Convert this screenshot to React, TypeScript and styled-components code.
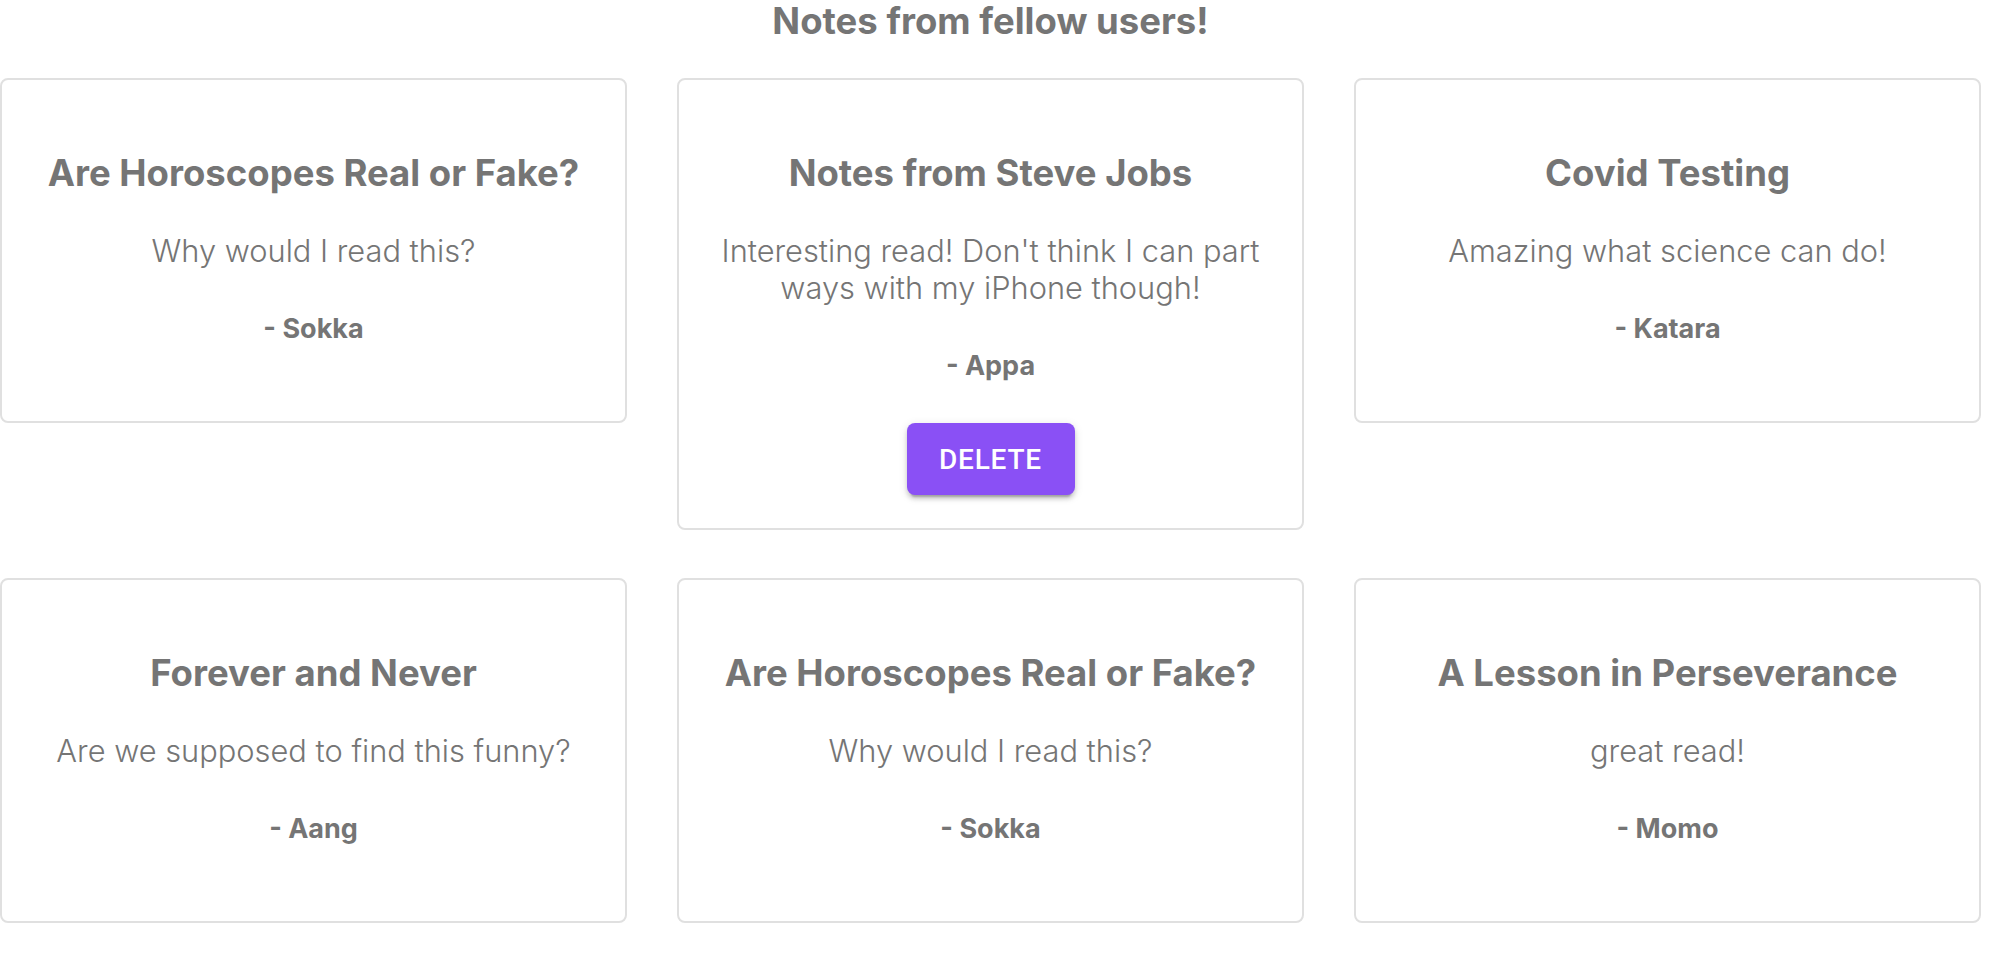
import React, { FC } from 'react';
import styled, { createGlobalStyle } from 'styled-components';

const GlobalStyle = createGlobalStyle`
  body {
    margin: 0;
    background: #ffffff;
    font-family: Inter, 'Noto Sans', sans-serif;
    color: #757575;
  }
`;

const Page = styled.main`
  width: 1981px;
`;

const Heading = styled.h1`
  margin: 0 0 36px;
  font-size: 36.5px;
  line-height: 42px;
  font-weight: 700;
  text-align: center;
  color: #757575;
`;

const Grid = styled.div`
  display: grid;
  grid-template-columns: repeat(3, 627px);
  column-gap: 50px;
  row-gap: 48px;
  align-items: start;
`;

const Card = styled.article`
  box-sizing: border-box;
  border: 2px solid #e0e0e0;
  border-radius: 8px;
  padding: 73px 32px 30px;
  text-align: center;
  background: #fff;
`;

const Title = styled.h2`
  margin: 0;
  font-size: 36.5px;
  line-height: 40px;
  font-weight: 700;
  color: #757575;
`;

const Body = styled.p`
  margin: 39px 0 45px;
  font-size: 30.8px;
  line-height: 37px;
  font-weight: 300;
  color: #757575;
`;

const Author = styled.p`
  margin: 0 0 47px;
  font-size: 27px;
  line-height: 30px;
  font-weight: 700;
  color: #757575;
`;

const DeleteButton = styled.button`
  display: block;
  margin: -5px auto 3px;
  width: 168px;
  height: 72px;
  border: none;
  border-radius: 8px;
  background: #8a50f5;
  color: #fff;
  font-family: Roboto, 'Liberation Sans', sans-serif;
  font-size: 28px;
  font-weight: 500;
  letter-spacing: 0.8px;
  text-transform: uppercase;
  cursor: pointer;
  box-shadow: 0 6px 2px -4px rgba(0, 0, 0, 0.2), 0 4px 4px 0 rgba(0, 0, 0, 0.14),
    0 2px 10px 0 rgba(0, 0, 0, 0.12);
`;

interface INote {
  id: number;
  title: string;
  body: string;
  author: string;
  mine?: boolean;
}

const notes: INote[] = [
  { id: 1, title: 'Are Horoscopes Real or Fake?', body: 'Why would I read this?', author: 'Sokka' },
  {
    id: 2,
    title: 'Notes from Steve Jobs',
    body: "Interesting read! Don't think I can part ways with my iPhone though!",
    author: 'Appa',
    mine: true,
  },
  { id: 3, title: 'Covid Testing', body: 'Amazing what science can do!', author: 'Katara' },
  { id: 4, title: 'Forever and Never', body: 'Are we supposed to find this funny?', author: 'Aang' },
  { id: 5, title: 'Are Horoscopes Real or Fake?', body: 'Why would I read this?', author: 'Sokka' },
  { id: 6, title: 'A Lesson in Perseverance', body: 'great read!', author: 'Momo' },
];

const App: FC = () => {
  return (
    <Page>
      <GlobalStyle />
      <Heading>Notes from fellow users!</Heading>
      <Grid>
        {notes.map((note) => (
          <Card key={note.id}>
            <Title>{note.title}</Title>
            <Body>{note.body}</Body>
            <Author>- {note.author}</Author>
            {note.mine && <DeleteButton>Delete</DeleteButton>}
          </Card>
        ))}
      </Grid>
    </Page>
  );
};

export default App;
